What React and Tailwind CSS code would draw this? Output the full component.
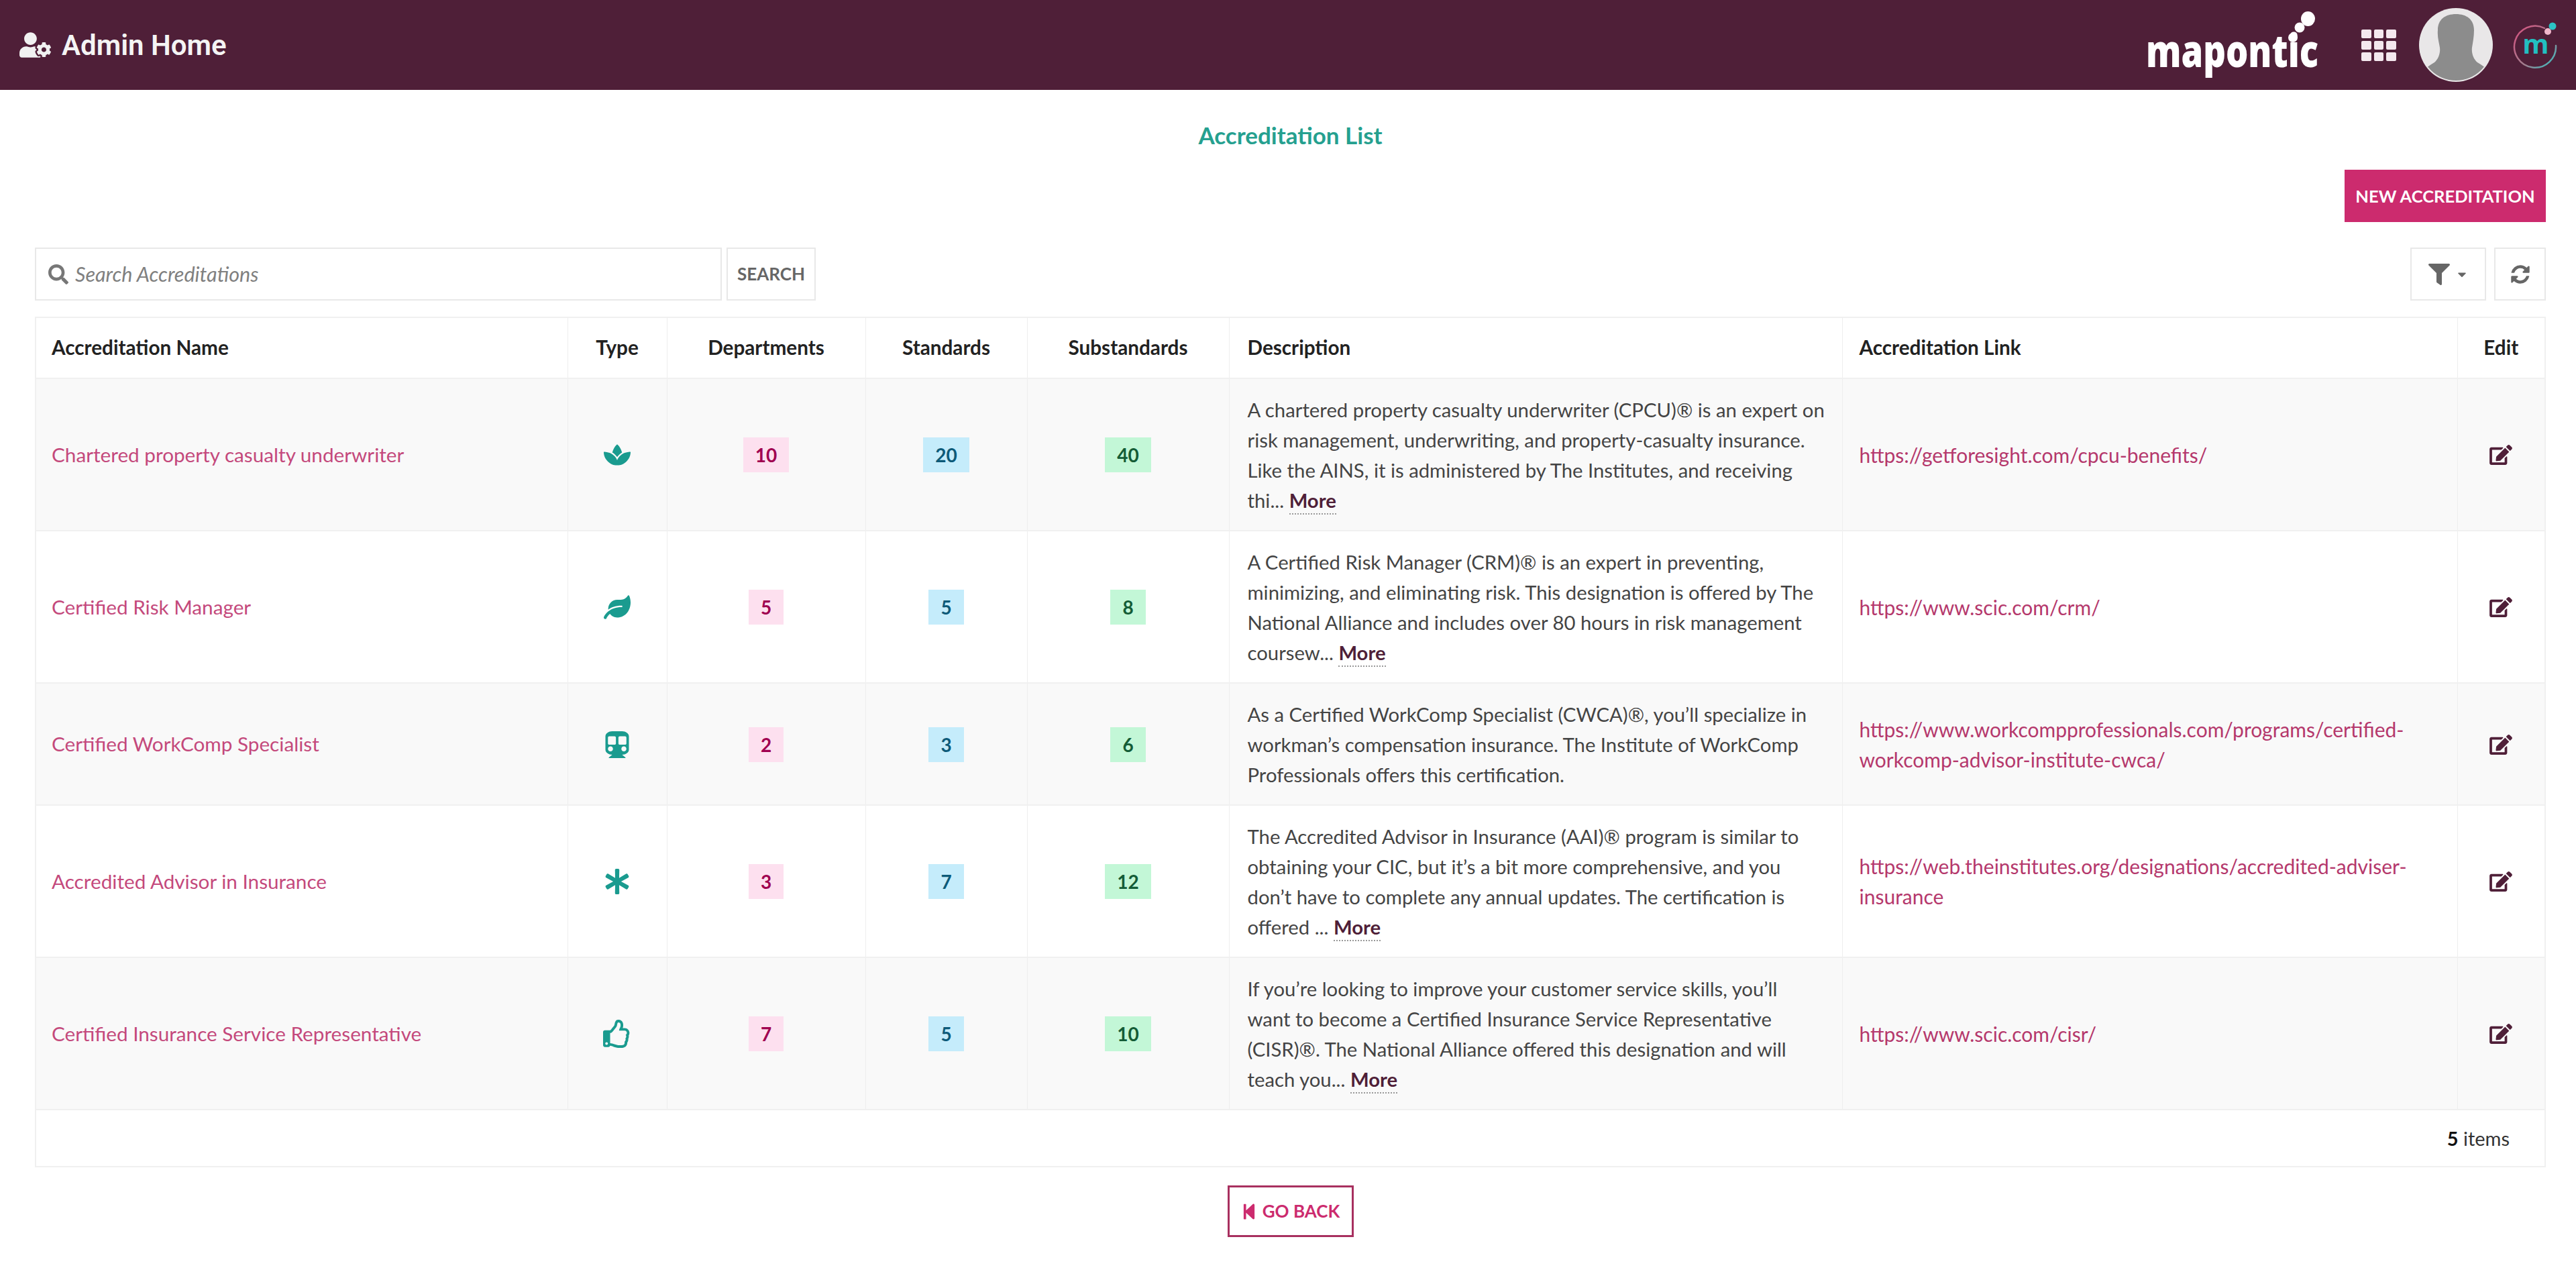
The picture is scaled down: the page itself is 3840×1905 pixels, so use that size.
import React from "react";
import { FaUserCog, FaSpa, FaLeaf, FaSubway, FaAsterisk, FaRegThumbsUp, FaFilter, FaCaretDown, FaEdit, FaSearch, FaStepBackward } from "react-icons/fa";

const rows = [
  { name: "Chartered property casualty underwriter", icon: <FaSpa className="w-[40px] h-[40px]" />, d: "10", s: "20", u: "40",
    desc: ["A chartered property casualty underwriter (CPCU)® is an expert on risk management, underwriting, and property-casualty insurance. Like the AINS, it is administered by The Institutes, and receiving thi... "], more: true, link: "https://getforesight.com/cpcu-benefits/", bg: "bg-[#f9f9f9]" },
  { name: "Certified Risk Manager", icon: <FaLeaf className="w-[40px] h-[40px]" />, d: "5", s: "5", u: "8",
    desc: ["A Certified Risk Manager (CRM)® is an expert in preventing, minimizing, and eliminating risk. This designation is offered by The National Alliance and includes over 80 hours in risk management coursew... "], more: true, link: "https://www.scic.com/crm/", bg: "bg-white" },
  { name: "Certified WorkComp Specialist", icon: <FaSubway className="w-[38px] h-[40px]" />, d: "2", s: "3", u: "6",
    desc: ["As a Certified WorkComp Specialist (CWCA)®, you’ll specialize in workman’s compensation insurance. The Institute of WorkComp Professionals offers this certification."], more: false, link: "https://www.workcompprofessionals.com/programs/certified-workcomp-advisor-institute-cwca/", bg: "bg-[#f9f9f9]" },
  { name: "Accredited Advisor in Insurance", icon: <FaAsterisk className="w-[38px] h-[40px]" />, d: "3", s: "7", u: "12",
    desc: ["The Accredited Advisor in Insurance (AAI)® program is similar to obtaining your CIC, but it’s a bit more comprehensive, and you don’t have to complete any annual updates. The certification is offered ... "], more: true, link: "https://web.theinstitutes.org/designations/accredited-adviser-insurance", bg: "bg-white" },
  { name: "Certified Insurance Service Representative", icon: <FaRegThumbsUp className="w-[42px] h-[42px]" />, d: "7", s: "5", u: "10",
    desc: ["If you’re looking to improve your customer service skills, you’ll", "want to become a Certified Insurance Service Representative (CISR)®. The National Alliance offered this designation and will teach you... "], more: true, link: "https://www.scic.com/cisr/", bg: "bg-[#f9f9f9]" },
];

function Logo() {
  return (
    <svg viewBox="0 0 270 120" className="w-[270px] h-[120px] overflow-visible">
      <text x="2" y="93" fontFamily="'Open Sans', sans-serif" fontWeight="800" fontSize="67" fill="#ffffff" textLength="257" lengthAdjust="spacingAndGlyphs">mapontic</text>
      <circle cx="221" cy="49" r="7" fill="#fff" />
      <circle cx="231" cy="34" r="7.5" fill="#fff" />
      <ellipse cx="243.5" cy="21" rx="10.5" ry="11" fill="#fff" />
    </svg>
  );
}

function Grid() {
  return (
    <div className="grid grid-cols-3 gap-[4px] w-[52px]">
      {Array.from({ length: 9 }).map((_, i) => (
        <span key={i} className="h-[13px] rounded-[2px] bg-[#f4e8ee]" />
      ))}
    </div>
  );
}

function Avatar() {
  return (
    <svg viewBox="0 0 110 110" className="w-[110px] h-[110px]">
      <circle cx="55" cy="55" r="55" fill="#e9e7e8" />
      <clipPath id="av"><circle cx="55" cy="55" r="53" /></clipPath>
      <path clipPath="url(#av)" d="M55 9c16 0 27 8 27 24 0 10-2 19-3 26-1 8 2 17 8 22 6 4 12 7 17 12v20H6V93c5-5 11-8 17-12 6-5 9-14 8-22-1-7-4-16-3-26 0-16 11-24 27-24z" fill="#8c8c8c" />
    </svg>
  );
}

function MLogo() {
  return (
    <div className="relative w-[70px] h-[70px]">
      <svg viewBox="0 0 70 70" className="absolute inset-0 w-full h-full">
        <defs>
          <linearGradient id="ring" x1="0" y1="0" x2="1" y2="1">
            <stop offset="0" stopColor="#d94f7f" />
            <stop offset="0.6" stopColor="#a0808f" />
            <stop offset="1" stopColor="#2bc4c4" />
          </linearGradient>
        </defs>
        <path d="M48 10 A 31 31 0 1 0 65 36" fill="none" stroke="url(#ring)" strokeWidth="2.5" strokeLinecap="round" />
        <circle cx="60" cy="7" r="5.5" fill="#2bc4c4" />
        <circle cx="53" cy="15" r="5" fill="#f0b8cc" />
      </svg>
      <span className="absolute left-0 right-0 top-[13px] text-center text-[40px] leading-[40px] font-bold text-[#22bfc0] font-['Open_Sans',sans-serif]">m</span>
    </div>
  );
}

function Refresh() {
  return (
    <svg viewBox="0 0 1792 1792" className="w-[32px] h-[32px]" fill="currentColor">
      <path d="M1639 1056q0 5-1 7-64 268-268 434.5t-478 166.5q-146 0-282.5-55t-243.5-157l-129 129q-19 19-45 19t-45-19-19-45v-448q0-26 19-45t45-19h448q26 0 45 19t19 45-19 45l-137 137q71 66 161 102t187 36q134 0 250-65t186-179q11-17 53-117 8-23 30-23h192q13 0 22.5 9.5t9.5 22.5zm25-800v448q0 26-19 45t-45 19h-448q-26 0-45-19t-19-45 19-45l138-138q-148-137-349-137-134 0-250 65t-186 179q-11 17-53 117-8 23-30 23h-199q-13 0-22.5-9.5t-9.5-22.5v-7q65-268 270-434.5t480-166.5q146 0 284 55.5t245 156.5l130-129q19-19 45-19t45 19 19 45z" />
    </svg>
  );
}

function Badge({ children, className }) {
  return <span className={`inline-block min-w-[52px] px-[18px] py-[9px] text-[28px] leading-[34px] font-bold text-center ${className}`}>{children}</span>;
}

const th = "border-r border-[#eeeeee] px-[25px] text-[29.7px] font-bold text-[#222222]";
const td = "border-r border-[#eeeeee] border-t-2 border-t-[#f0f0f0] px-[25px] pt-[23px] pb-[22px]";

export default function App() {
  return (
    <div className="min-h-[1905px] bg-white font-['Lato',sans-serif] text-[#444444]">
      <header className="h-[134px] bg-[#4f1f38] flex items-center pl-[29px] pr-[25px]">
        <FaUserCog className="w-[47px] h-[38px] text-[#f1f1f1]" />
        <span className="ml-[16px] text-[42px] font-semibold text-[#f4f4f4] font-['Roboto',sans-serif]">Admin Home</span>
        <div className="ml-auto flex items-center">
          <Logo />
          <div className="ml-[53px]"><Grid /></div>
          <div className="ml-[34px]"><Avatar /></div>
          <div className="ml-[29px]"><MLogo /></div>
        </div>
      </header>

      <main className="pl-[52px] pr-[45px]">
        <h1 className="pt-[47px] text-center text-[35px] leading-[40px] font-bold text-[#25a08f]">Accreditation List</h1>

        <div className="mt-[32px] flex justify-end">
          <button className="w-[300px] h-[78px] bg-[#cc2b6e] text-white text-[25.5px] font-bold">NEW ACCREDITATION</button>
        </div>

        <div className="mt-[38px] flex items-center">
          <div className="w-[1024px] h-[79px] border-2 border-[#e8e8e8] flex items-center pl-[18px]">
            <FaSearch className="w-[30px] h-[30px] text-[#777777]" />
            <span className="ml-[10px] text-[30.5px] italic text-[#808080]">Search Accreditations</span>
          </div>
          <button className="ml-[7px] w-[133px] h-[79px] border-2 border-[#e8e8e8] text-[26px] font-bold text-[#666666]">SEARCH</button>
          <button className="ml-auto w-[113px] h-[79px] border-2 border-[#e8e8e8] flex items-center justify-center text-[#666666]">
            <FaFilter className="w-[32px] h-[32px]" />
            <FaCaretDown className="ml-[8px] w-[20px] h-[20px]" />
          </button>
          <button className="ml-[12px] w-[77px] h-[79px] border-2 border-[#e8e8e8] flex items-center justify-center text-[#666666]">
            <Refresh />
          </button>
        </div>

        <div className="mt-[24px] border-2 border-[#f0f0f0]">
          <table className="w-full table-fixed border-collapse">
            <colgroup>
              <col className="w-[792px]" />
              <col className="w-[148px]" />
              <col className="w-[296px]" />
              <col className="w-[241px]" />
              <col className="w-[301px]" />
              <col className="w-[914px]" />
              <col className="w-[917px]" />
              <col />
            </colgroup>
            <thead>
              <tr className="h-[90px]">
                <th className={`${th} text-left pl-[23px]`}>Accreditation Name</th>
                <th className={th}>Type</th>
                <th className={th}>Departments</th>
                <th className={th}>Standards</th>
                <th className={th}>Substandards</th>
                <th className={`${th} text-left pl-[27px]`}>Description</th>
                <th className={`${th} text-left`}>Accreditation Link</th>
                <th className={`${th} border-r-0`}>Edit</th>
              </tr>
            </thead>
            <tbody>
              {rows.map((r) => (
                <tr key={r.name} className={r.bg}>
                  <td className={`${td} pl-[23px] text-[29.7px] text-[#c4497c]`}>{r.name}</td>
                  <td className={`${td} text-[#1a9b8f]`}><div className="flex justify-center">{r.icon}</div></td>
                  <td className={`${td} text-center`}><Badge className="bg-[#fde0ef] text-[#a00050]">{r.d}</Badge></td>
                  <td className={`${td} text-center`}><Badge className="bg-[#c5ecfb] text-[#0d5a78]">{r.s}</Badge></td>
                  <td className={`${td} text-center`}><Badge className="bg-[#c3f7d7] text-[#145c36]">{r.u}</Badge></td>
                  <td className={`${td} pl-[27px] pr-[23px] text-[29.3px] leading-[45px]`}>
                    {r.desc.map((t, i) => (
                      <React.Fragment key={i}>
                        {i > 0 && <br />}
                        {t}
                      </React.Fragment>
                    ))}
                    {r.more && <a className="font-bold text-[#4f1f38] border-b-2 border-dotted border-[#999999] pb-[2px]">More</a>}
                  </td>
                  <td className={`${td} text-[30px] leading-[45px] text-[#b5386c]`}>{r.link}</td>
                  <td className={`${td} border-r-0 text-[#4f1f38]`}><div className="flex justify-center"><FaEdit className="w-[34px] h-[30px]" /></div></td>
                </tr>
              ))}
            </tbody>
          </table>
          <div className="h-[85px] border-t-2 border-[#f0f0f0] flex items-center justify-end pr-[52px] text-[29px] text-[#333333]">
            <b className="text-[#111111]">5</b>&nbsp;items
          </div>
        </div>

        <div className="mt-[27px] flex justify-center">
          <button className="w-[188px] h-[77px] border-[3px] border-[#a8305f] flex items-center justify-center text-[#cc2b6e] text-[26px] font-bold">
            <FaStepBackward className="w-[24px] h-[26px]" />
            <span className="ml-[8px]">GO BACK</span>
          </button>
        </div>
      </main>
    </div>
  );
}
